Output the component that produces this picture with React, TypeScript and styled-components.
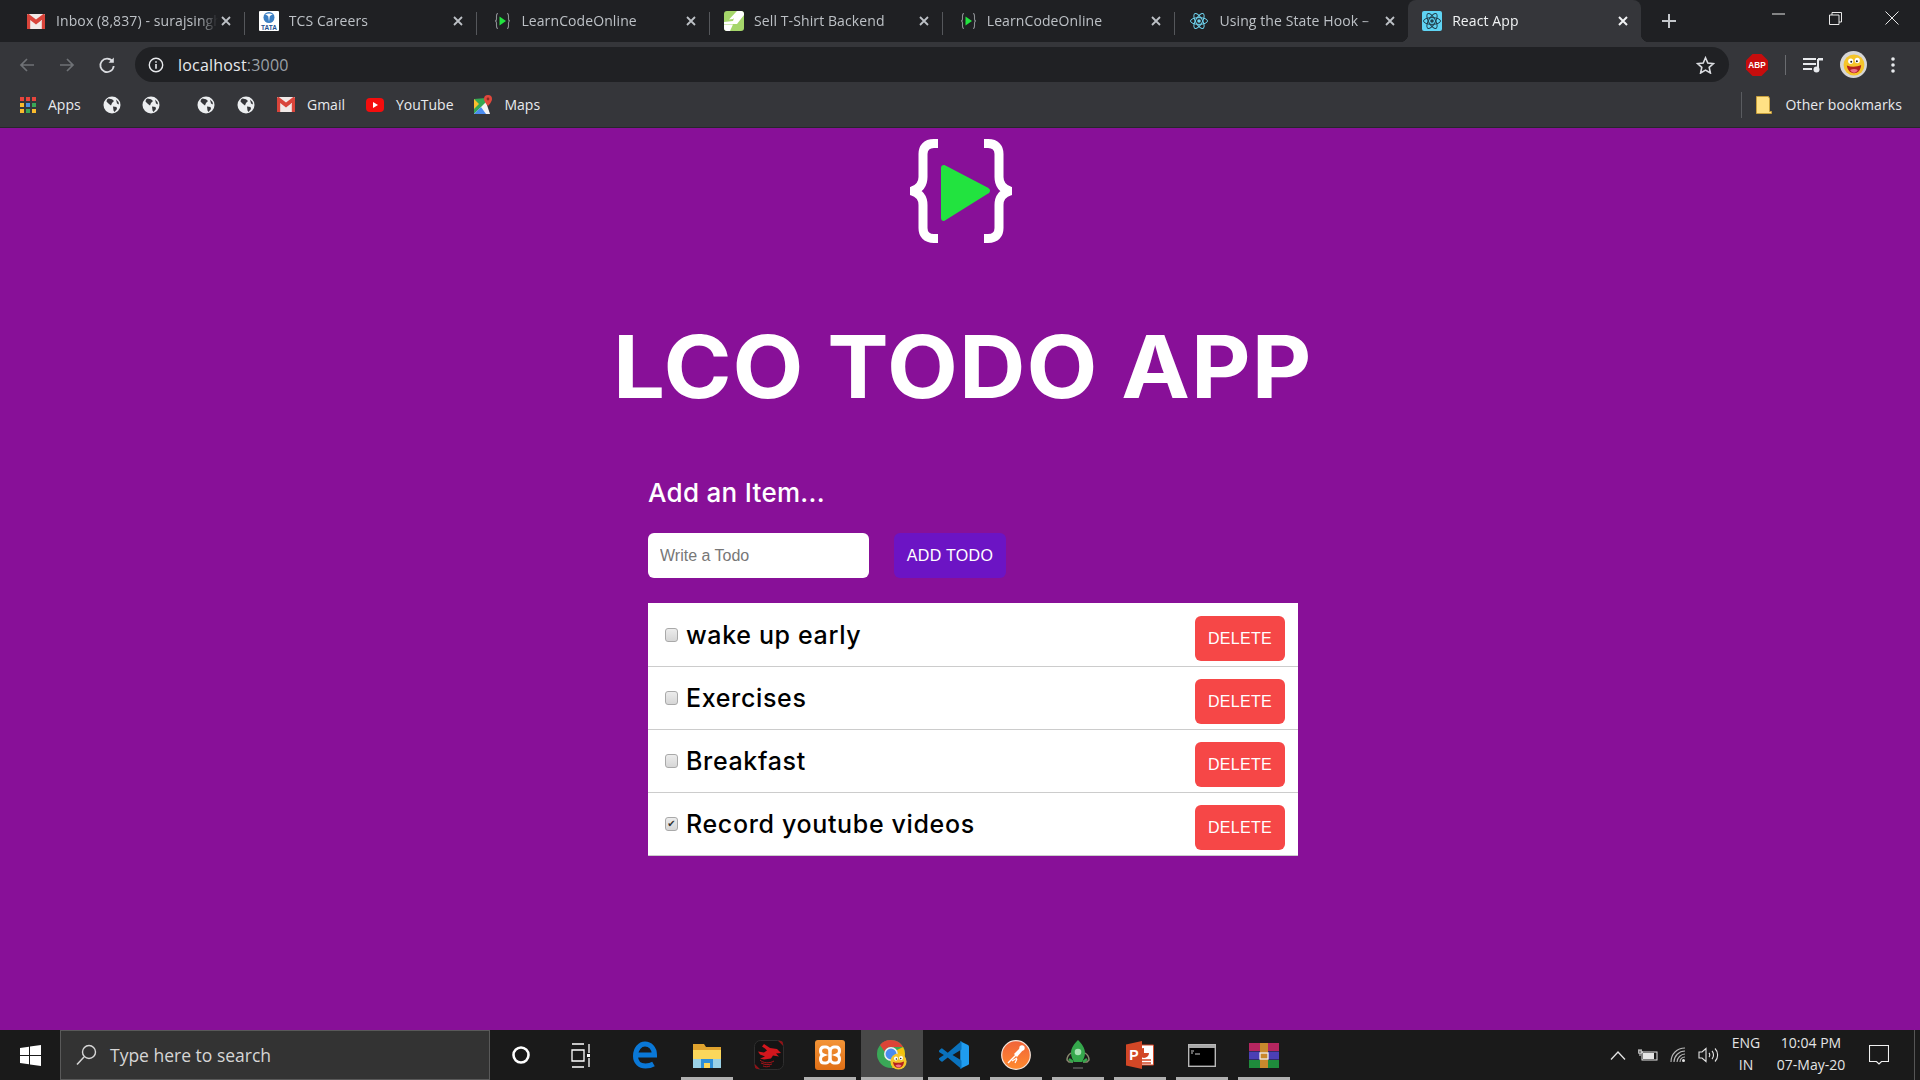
import React from "react";
import styled, { createGlobalStyle } from "styled-components";

const Global = createGlobalStyle`
  html, body { margin: 0; padding: 0; height: 100%; overflow: hidden; }
  body { background: #881098; font-family: "Open Sans", "Liberation Sans", sans-serif; }
  * { box-sizing: border-box; }
`;

const Screen = styled.div`
  width: 1920px;
  height: 1080px;
  display: flex;
  flex-direction: column;
  overflow: hidden;
`;

/* ---------- tab strip ---------- */
const TabStrip = styled.div`
  height: 42px;
  flex: none;
  background: #1f2023;
  display: flex;
  padding-left: 12px;
`;
const Tab = styled.div<{ $active?: boolean; $last?: boolean }>`
  position: relative;
  width: 232.7px;
  height: 42px;
  flex: none;
  display: flex;
  align-items: center;
  padding: 0 8px 0 14px;
  color: ${(p) => (p.$active ? "#f1f3f4" : "#bdc1c6")};
  background: ${(p) => (p.$active ? "#35363a" : "transparent")};
  border-radius: ${(p) => (p.$active ? "8px 8px 0 0" : "0")};
  border-right: ${(p) => (p.$active || p.$last ? "none" : "1px solid #55575b")};
  background-clip: ${(p) => (p.$active ? "border-box" : "padding-box")};
  ${(p) =>
    !p.$active && !p.$last
      ? `&::after { content: ""; position: absolute; right: -1px; top: 0; width: 1px; height: 12px; background: #1f2023; }
         &::before { content: ""; position: absolute; right: -1px; bottom: 0; width: 1px; height: 7px; background: #1f2023; }`
      : ""}
  ${(p) =>
    p.$active
      ? `&::before, &::after { content: ""; position: absolute; bottom: 0; width: 8px; height: 8px; }
         &::before { left: -8px; background: radial-gradient(circle at 0 0, #1f2023 8px, #35363a 8.5px); }
         &::after { right: -8px; background: radial-gradient(circle at 100% 0, #1f2023 8px, #35363a 8.5px); }`
      : ""}
`;
const Favicon = styled.span`
  width: 20px;
  height: 20px;
  flex: none;
  display: flex;
  align-items: center;
  justify-content: center;
`;
const TabTitle = styled.span`
  flex: 1;
  min-width: 0;
  margin: 0 0 2px 10px;
  font-size: 14px;
  letter-spacing: 0.1px;
  white-space: nowrap;
  overflow: hidden;
  -webkit-mask-image: linear-gradient(to right, #000 88%, transparent 100%);
  mask-image: linear-gradient(to right, #000 88%, transparent 100%);
`;
const TabClose = styled.span`
  width: 16px;
  height: 16px;
  flex: none;
  margin-right: 2px;
  display: flex;
  align-items: center;
  justify-content: center;
`;
const NewTab = styled.span`
  margin-left: 17px;
  width: 22px;
  height: 42px;
  flex: none;
  display: flex;
  align-items: center;
  justify-content: center;
`;
const WindowControls = styled.div`
  margin-left: auto;
  display: flex;
`;
const WindowButton = styled.span`
  width: 56.5px;
  height: 36px;
  display: flex;
  align-items: center;
  justify-content: center;
`;

/* ---------- toolbar ---------- */
const Toolbar = styled.div`
  height: 40px;
  flex: none;
  background: #35363a;
  padding: 5px 0 0 7px;
  display: flex;
  align-items: center;
`;
const NavButton = styled.span`
  width: 40px;
  height: 35px;
  flex: none;
  display: flex;
  align-items: center;
  justify-content: center;
`;
const Omnibox = styled.div`
  margin-left: 8px;
  width: 1594px;
  height: 35px;
  flex: none;
  background: #202124;
  border-radius: 18px;
  display: flex;
  align-items: center;
  padding: 0 14px 0 13px;
`;
const Url = styled.span`
  margin-left: 14px;
  flex: 1;
  font-family: "Open Sans", sans-serif;
  font-size: 16px;
  letter-spacing: 0.2px;
  color: #e8eaed;
  em { font-style: normal; color: #9aa0a6; }
`;
const ToolButton = styled.span<{ $w: number }>`
  width: ${(p) => p.$w}px;
  height: 35px;
  flex: none;
  display: flex;
  align-items: center;
  justify-content: center;
`;
const ToolDivider = styled.span`
  width: 1px;
  height: 20px;
  flex: none;
  background: #6a6c70;
`;

/* ---------- bookmarks ---------- */
const BookmarkBar = styled.div`
  height: 46px;
  flex: none;
  background: #35363a;
  border-bottom: 1px solid #26272a;
  padding-left: 20px;
  display: flex;
  align-items: center;
`;
const Bookmark = styled.span<{ $w: number }>`
  width: ${(p) => p.$w}px;
  flex: none;
  display: flex;
  align-items: center;
  gap: 12px;
  color: #e8eaed;
  font-size: 14px;
`;
const OtherBookmarks = styled.span`
  margin-left: auto;
  margin-right: 18px;
  height: 26px;
  display: flex;
  align-items: center;
  gap: 14px;
  padding-left: 14px;
  border-left: 1px solid #5a5c60;
  color: #e8eaed;
  font-size: 14px;
  letter-spacing: 0.1px;
`;

/* ---------- page ---------- */
const Page = styled.main`
  flex: 1;
  min-height: 0;
  background: #881098;
  padding-top: 11px;
  display: flex;
  flex-direction: column;
`;
const LogoRow = styled.div`
  display: flex;
  justify-content: center;
  padding-left: 2px;
`;
const Title = styled.h1`
  margin: 74px 0 0;
  height: 100px;
  line-height: 100px;
  text-align: center;
  color: #fff;
  font-family: Inter, "Liberation Sans", sans-serif;
  font-weight: 650;
  font-size: 86px;
  letter-spacing: 1px;
  padding-left: 5px;
  transform: scaleX(1.07);
`;
const Panel = styled.section`
  margin: 61px 0 0 648px;
  width: 650px;
`;
const AddHeading = styled.h2`
  margin: 0;
  height: 30px;
  line-height: 30px;
  color: #fff;
  font-family: Inter, "Liberation Sans", sans-serif;
  font-weight: 500;
  font-size: 26px;
  letter-spacing: 0.3px;
`;
const AddRow = styled.form`
  margin-top: 25px;
  display: flex;
  gap: 25px;
`;
const TodoInput = styled.input`
  width: 221px;
  height: 45px;
  border: 0;
  border-radius: 6px;
  background: #fff;
  padding: 0 12px;
  font-family: "Liberation Sans", Arial, sans-serif;
  font-size: 16px;
  outline: none;
  &::placeholder { color: #777; opacity: 1; }
`;
const ActionButton = styled.button<{ $tone: string }>`
  height: 45px;
  border: 0;
  border-radius: 6px;
  background: ${(p) => p.$tone};
  color: #fff;
  font-family: "Liberation Sans", Arial, sans-serif;
  font-size: 16px;
  letter-spacing: 0.3px;
  padding: 0;
  flex: none;
`;
const AddButton = styled(ActionButton)`
  width: 112px;
`;
const DeleteButton = styled(ActionButton)`
  width: 90px;
  margin-top: 7px;
`;
const List = styled.ul`
  margin: 25px 0 0;
  padding: 1px 0 0;
  list-style: none;
  background: #fff;
`;
const Row = styled.li`
  height: 63px;
  border-bottom: 1px solid #ccc;
  padding: 0 13px 0 17px;
  display: flex;
  align-items: center;
`;
const RowCheck = styled.input`
  appearance: none;
  position: relative;
  width: 13px;
  height: 14px;
  margin: 0 8px 0 0;
  flex: none;
  border: 1px solid #a9a9a9;
  border-radius: 3px;
  background: linear-gradient(#ececec, #d6d6d6);
  &:checked::after {
    content: "✔";
    position: absolute;
    inset: 0;
    line-height: 12px;
    text-align: center;
    font-size: 10px;
    color: #333;
    font-family: "DejaVu Sans", sans-serif;
  }
`;
const RowText = styled.span`
  flex: 1;
  color: #000;
  font-family: Inter, "Liberation Sans", sans-serif;
  font-weight: 500;
  font-size: 25px;
  letter-spacing: 0.65px;
`;

/* ---------- taskbar ---------- */
const Taskbar = styled.footer`
  height: 50px;
  flex: none;
  background: #1a1a1a;
  display: flex;
  align-items: stretch;
`;
const StartButton = styled.span`
  width: 60px;
  flex: none;
  display: flex;
  align-items: center;
  justify-content: center;
`;
const SearchBox = styled.div`
  width: 430px;
  flex: none;
  background: #333;
  border: 1px solid #595959;
  display: flex;
  align-items: center;
  padding-left: 15px;
  gap: 13px;
  color: #d6d6d6;
  font-size: 17.5px;
`;
const TaskSlot = styled.span<{ $running?: boolean; $active?: boolean }>`
  position: relative;
  width: 61.9px;
  flex: none;
  display: flex;
  align-items: center;
  justify-content: center;
  background: ${(p) => (p.$active ? "#484848" : "transparent")};
  &::after {
    content: "";
    display: ${(p) => (p.$running ? "block" : "none")};
    position: absolute;
    bottom: 0;
    height: 3px;
    left: ${(p) => (p.$active ? 0 : "5px")};
    right: ${(p) => (p.$active ? 0 : "5px")};
    background: #b0b0b0;
  }
`;
const Tray = styled.div`
  margin-left: auto;
  display: flex;
  align-items: center;
  color: #e4e4e4;
  font-size: 14px;
`;
const TrayIcon = styled.span<{ $w: number }>`
  width: ${(p) => p.$w}px;
  display: flex;
  align-items: center;
  justify-content: center;
`;
const TrayText = styled.div<{ $w: number }>`
  width: ${(p) => p.$w}px;
  text-align: center;
  line-height: 22px;
  padding-bottom: 2px;
  white-space: nowrap;
`;
const TrayEdge = styled.span`
  width: 1px;
  height: 100%;
  margin: 0 5px 0 9px;
  background: #555;
`;

/* ---------- drawings ---------- */
const CloseX = ({ c = "#bdc1c6", w = 1.8 }: { c?: string; w?: number }) => (
  <svg width="10" height="10" viewBox="0 0 10 10"><path d="M1 1l8 8M9 1l-8 8" stroke={c} strokeWidth={w} fill="none" /></svg>
);
const GmailIcon = () => (
  <svg width="18" height="15" viewBox="0 0 18 15">
    <rect width="18" height="15" rx="1" fill="#f1e9e7" />
    <path d="M0 1.5V15h3.2V6L9 10.4 14.8 6v9H18V1.5C18 .3 16.6-.4 15.6.4L9 5.4 2.4.4C1.4-.4 0 .3 0 1.5z" fill="#d9443a" />
  </svg>
);
const TataIcon = () => (
  <svg width="20" height="20" viewBox="0 0 20 20">
    <rect width="20" height="20" rx="1" fill="#fff" />
    <circle cx="10" cy="6.5" r="5.5" fill="#3b7fc4" />
    <path d="M6 3.5c3-1.4 5-1.4 8 0-1.5.4-2.5 1-3.3 2L10 11 9.3 5.5C8.5 4.5 7.5 3.9 6 3.5z" fill="#fff" />
    <text x="10" y="18.5" textAnchor="middle" fontSize="6.5" fontWeight="700" fontFamily="Liberation Sans" fill="#1d4f91">TATA</text>
  </svg>
);
const LcoIcon = () => (
  <svg width="20" height="20" viewBox="-3 0 20 20">
    <path d="M4 2.5C2.5 2.5 2.5 3.5 2.5 5v3c0 1-.5 2-1.5 2 1 0 1.5 1 1.5 2v3c0 1.5 0 2.5 1.5 2.5M13 2.5c1.5 0 1.500 1 1.500 2.500v3c0 1 .5 2 1.500 2-1 0-1.500 1-1.500 2v3c0 1.500 0 2.500-1.500 2.500" fill="none" stroke="#8d9094" strokeWidth="1.1" />
    <path d="M5.5 5.5L12 10l-6.500 4.500z" fill="#22e33f" />
  </svg>
);
const ShirtIcon = () => (
  <svg width="20" height="20" viewBox="0 0 20 20">
    <rect width="20" height="20" rx="3" fill="#a5d66a" />
    <path d="M0 11l9-1 1-3-1 1-4 .5L13 0h4c1.7 0 3 1.3 3 3v1l-7 9H0z" fill="#fff" />
    <path d="M0 13.5h9L6 20H3c-1.7 0-3-1.3-3-3z" fill="#fff" />
  </svg>
);
const AtomIcon = ({ c = "#61dafb", bg, s = 20 }: { c?: string; bg?: string; s?: number }) => (
  <svg width={s} height={s} viewBox="0 0 20 20">
    {bg && <rect width="20" height="20" rx="2" fill={bg} />}
    <g fill="none" stroke={c} strokeWidth="1">
      <ellipse cx="10" cy="10" rx="8.5" ry="3.4" />
      <ellipse cx="10" cy="10" rx="8.5" ry="3.4" transform="rotate(60 10 10)" />
      <ellipse cx="10" cy="10" rx="8.5" ry="3.4" transform="rotate(120 10 10)" />
    </g>
    <circle cx="10" cy="10" r="1.8" fill={c} />
  </svg>
);
const Arrow = ({ c, flip }: { c: string; flip?: boolean }) => (
  <svg width="16" height="16" viewBox="0 0 16 16" style={flip ? { transform: "scaleX(-1)" } : undefined}>
    <path d="M15 8H2M8 2L2 8l6 6" fill="none" stroke={c} strokeWidth="1.7" />
  </svg>
);
const Reload = () => (
  <svg width="18" height="18" viewBox="0 0 18 18">
    <path d="M14.5 5.5A6.7 6.7 0 1 0 15.7 10" fill="none" stroke="#dadce0" strokeWidth="1.8" />
    <path d="M15.8 1.5v5.3h-5.3z" fill="#dadce0" />
  </svg>
);
const Info = () => (
  <svg width="16" height="16" viewBox="0 0 16 16">
    <circle cx="8" cy="8" r="6.7" fill="none" stroke="#e8eaed" strokeWidth="1.4" />
    <path d="M7.2 7h1.6v4.7H7.2zM7.2 4.2h1.6v1.6H7.2z" fill="#e8eaed" />
  </svg>
);
const Star = () => (
  <svg width="19" height="18" viewBox="0 0 19 18">
    <path d="M9.5 1.8l2.300 5.200 5.700.6-4.300 3.800 1.200 5.600-4.900-2.900-4.900 2.900 1.200-5.600L1.500 7.600l5.700-.6z" fill="none" stroke="#dadce0" strokeWidth="1.6" />
  </svg>
);
const Abp = () => (
  <svg width="22" height="22" viewBox="0 0 22 22">
    <path d="M6.5 0h9L22 6.5v9L15.5 22h-9L0 15.5v-9z" fill="#c70d0d" />
    <text x="11" y="14.3" textAnchor="middle" fontSize="8.2" fontWeight="700" fontFamily="Liberation Sans" fill="#fff">ABP</text>
  </svg>
);
const MediaIcon = () => (
  <svg width="20" height="16" viewBox="0 0 20 16">
    <path d="M0 1h13v2H0zM0 6h13v2H0zM0 11h9v2H0z" fill="#e8eaed" />
    <path d="M15 2v9.5" stroke="#e8eaed" strokeWidth="2" />
    <circle cx="13.5" cy="12.5" r="3" fill="#e8eaed" />
    <path d="M15 1h5v2.5h-5z" fill="#e8eaed" />
  </svg>
);
const Face = ({ s }: { s: number }) => (
  <svg width={s} height={s} viewBox="0 0 20 20">
    <circle cx="10" cy="10" r="9.5" fill="#f5c52a" />
    <ellipse cx="7" cy="6.5" rx="2.3" ry="2.5" fill="#fff" />
    <ellipse cx="13" cy="6" rx="2.3" ry="2.5" fill="#fff" />
    <circle cx="7.5" cy="7" r=".9" fill="#222" />
    <circle cx="12.6" cy="6.5" r=".9" fill="#222" />
    <path d="M3.5 10.5c4 1.5 9 1.5 13-.5-.4 5-3 7.5-6.5 7.5s-6-3-6.500-7z" fill="#b3211e" />
    <path d="M6.5 14.5c2-1.200 5-1.200 7 0-1 1.800-2 2.500-3.500 2.500s-2.500-.7-3.500-2.500z" fill="#f0708a" />
  </svg>
);
const Avatar = styled.span`
  width: 27px;
  height: 27px;
  border-radius: 50%;
  background: #d6d6d6;
  display: flex;
  flex: none;
  align-items: center;
  justify-content: center;
`;
const Dots = () => (
  <svg width="4" height="16" viewBox="0 0 4 16">
    <circle cx="2" cy="2" r="1.8" fill="#e8eaed" />
    <circle cx="2" cy="8" r="1.8" fill="#e8eaed" />
    <circle cx="2" cy="14" r="1.8" fill="#e8eaed" />
  </svg>
);
const AppsIcon = () => {
  const colors = ["#e8453c", "#e8453c", "#e8453c", "#f9bb2d", "#4a90e2", "#3aa757", "#f9bb2d", "#3aa757", "#f9bb2d"];
  return (
    <svg width="16" height="16" viewBox="0 0 16 16">
      {colors.map((c, i) => (
        <rect key={i} x={(i % 3) * 6} y={Math.floor(i / 3) * 6} width="4" height="4" fill={c} />
      ))}
    </svg>
  );
};
const Globe = () => (
  <svg width="18" height="18" viewBox="0 0 18 18">
    <circle cx="9" cy="9" r="8.5" fill="#eceef0" />
    <path d="M5.5 2.5l3.5.8 2 1.700-2 2-1 2.500-2-1.500-2.500-2.500.5-2zM10 10.500l3.500.5.5 2-2.500 3-1-1.500zM13 3.500l2.500 2.500.5 2.500-2-1z" fill="#35363a" />
  </svg>
);
const YouTubeIcon = () => (
  <svg width="18" height="14" viewBox="0 0 18 14">
    <rect width="18" height="14" rx="4" fill="#f40d0d" />
    <path d="M7 4l5 3-5 3z" fill="#fff" />
  </svg>
);
const MapsIcon = () => (
  <svg width="18" height="20" viewBox="0 0 18 20">
    <path d="M0 4l12-1v16H0z" fill="#35a853" />
    <path d="M0 19L12 7l4 12z" fill="#f4f4f4" />
    <path d="M0 19l7-7 5 7z" fill="#4a8cf0" />
    <path d="M0 4l5 5-5 5z" fill="#fbc02d" />
    <path d="M14 0a4 4 0 0 1 4 4c0 3-4 7-4 7s-4-4-4-7a4 4 0 0 1 4-4z" fill="#e0483c" />
    <circle cx="14" cy="4" r="1.4" fill="#8d2a22" />
  </svg>
);
const FolderIcon = () => (
  <svg width="16" height="18" viewBox="0 0 16 18">
    <path d="M.5.5h12l1 2v13h2v2H.5z" fill="#ffe184" stroke="#c79f3c" />
  </svg>
);
const Logo = () => (
  <svg width="102" height="104" viewBox="0 0 102 104">
    <path d="M28 4.5H24C16 4.5 13 9 13 15V38C13 46 9 50 2 52 9 54 13 58 13 66V89C13 95 16 99.5 24 99.5H28M74 4.5H78C86 4.5 89 9 89 15V38C89 46 93 50 100 52 93 54 89 58 89 66V89C89 95 86 99.5 78 99.5H74" fill="none" stroke="#fff" strokeWidth="9" strokeLinejoin="round" />
    <path d="M34 27l44 23a2 2 0 0 1 0 3.5L34 81a2 2 0 0 1-2-2V29a2 2 0 0 1 2-2z" fill="#22e33f" stroke="#22e33f" strokeWidth="2" strokeLinejoin="round" />
  </svg>
);
const WinLogo = () => (
  <svg width="21" height="21" viewBox="0 0 21 21">
    <path d="M0 3l9-1.300v8.300H0zM10 1.500L21 0v10H10zM0 11h9v8.300L0 18zM10 11h11v10l-11-1.500z" fill="#fff" />
  </svg>
);
const SearchGlass = () => (
  <svg width="21" height="22" viewBox="0 0 21 22">
    <circle cx="13" cy="8" r="6.5" fill="none" stroke="#d8d8d8" strokeWidth="1.4" />
    <path d="M8 13L1 20.5" stroke="#d8d8d8" strokeWidth="1.5" />
  </svg>
);
const Cortana = () => (
  <svg width="20" height="20" viewBox="0 0 20 20"><circle cx="10" cy="10" r="7.5" fill="none" stroke="#fff" strokeWidth="2.6" /></svg>
);
const TaskView = () => (
  <svg width="20" height="25" viewBox="0 0 20 25" style={{ marginRight: 4 }}>
    <path d="M1 1h12M1 24h12M1 7h12v11H1zM18 1v9M18 15v9" fill="none" stroke="#fff" strokeWidth="1.3" />
    <rect x="16" y="11" width="3" height="3" fill="#fff" />
  </svg>
);
const EdgeIcon = () => (
  <svg width="24" height="28" viewBox="0 0 24 28">
    <path d="M4 14h17.5C21.5 7 17 3 12 3 7 3 2.5 8 2.5 15c0 6.5 4.5 10 10 10 3 0 6-.8 8-2" fill="none" stroke="#0a78d7" strokeWidth="5" />
  </svg>
);
const ExplorerIcon = () => (
  <svg width="28" height="26" viewBox="0 0 28 26">
    <path d="M0 2h11l2 3h15v5H0z" fill="#e0a32e" />
    <path d="M0 8h28v18H0z" fill="#fbd75b" />
    <path d="M8 17h12v9h-3v-5h-6v5H8z" fill="#2f8fd8" />
    <path d="M0 17h8v9H0zM20 17h8v9h-8z" fill="#8fd0f5" opacity=".9" />
  </svg>
);
const MsiIcon = () => (
  <svg width="30" height="30" viewBox="0 0 30 30">
    <rect x=".5" y=".5" width="29" height="29" rx="6" fill="#141414" stroke="#2e2e2e" />
    <path d="M24 .8l5 5v-2a3 3 0 0 0-3-3zM.8 24l5 5h-2a3 3 0 0 1-3-3z" fill="#8e1418" />
    <path d="M10 4l6 4 7 1 4 4-5 .5 3 3-6-1-2 3-7 1-4-1 5-2-5-2-2-3 6 1 3-2-2-2-3-2z" fill="#d3161d" />
    <path d="M6 20c3 3 9 4 14 1M7 23c4 2 8 2 11 1M9 26c2 1 5 1 7 0" fill="none" stroke="#a81319" strokeWidth="1" />
  </svg>
);
const XamppIcon = () => (
  <svg width="30" height="30" viewBox="0 0 30 30">
    <defs>
      <linearGradient id="xamppFill" x1="0" y1="0" x2="0" y2="1">
        <stop offset="0" stopColor="#f39437" />
        <stop offset="1" stopColor="#e06f16" />
      </linearGradient>
    </defs>
    <rect width="30" height="30" rx="3" fill="url(#xamppFill)" />
    <path d="M9 7h2c2 0 3 1.5 4 3 1-1.5 2-3 4-3h2c2.5 0 3.5 2 3.5 4 0 2-1.5 3.5-3 4 1.5.5 3 2 3 4s-1 4-3.5 4h-2c-2 0-3-1.500-4-3-1 1.500-2 3-4 3H9c-2.500 0-3.500-2-3.500-4s1.500-3.500 3-4c-1.500-.5-3-2-3-4s1-4 3.500-4z" fill="none" stroke="#fff" strokeWidth="3" />
    <path d="M15 9v12" stroke="#fff" strokeWidth="3.5" />
  </svg>
);
const ChromeIcon = () => (
  <svg width="30" height="30" viewBox="0 0 30 30">
    <circle cx="14" cy="14" r="14" fill="#3aa757" />
    <path d="M14 0a14 14 0 0 1 12.1 7H14a7 7 0 0 0-6.5 4.5L3 5A14 14 0 0 1 14 0z" fill="#dc4437" />
    <path d="M26.1 7A14 14 0 0 1 15 28l6-11-1-7z" fill="#f4c20d" />
    <circle cx="14" cy="14" r="6.2" fill="#4a8cf0" stroke="#eee" strokeWidth="1.5" />
    <g transform="translate(13 13)"><Face s={17} /></g>
  </svg>
);
const VsCodeIcon = () => (
  <svg width="30" height="30" viewBox="0 0 24 24">
    <path d="M17 1l6.2 3A1.5 1.5 0 0 1 24 5.3v13.4a1.5 1.5 0 0 1-.8 1.3L17 23z" fill="#1f9cf0" />
    <path d="M18 .8L7 10.1 2.900 6.900a1 1 0 0 0-1.300.1L.3 8.200a1 1 0 0 0 0 1.500L3.900 12 .3 14.300a1 1 0 0 0 0 1.500l1.300 1.200a1 1 0 0 0 1.300.1L7 13.900 18 23.200v-6.800L10.800 12 18 7.600z" fill="#0a72bd" />
  </svg>
);
const PostmanIcon = () => (
  <svg width="30" height="30" viewBox="0 0 30 30">
    <defs>
      <linearGradient id="postmanFill" x1="0" y1="0" x2="0" y2="1">
        <stop offset="0" stopColor="#f0643a" />
        <stop offset="1" stopColor="#ff8a2e" />
      </linearGradient>
    </defs>
    <circle cx="15" cy="15" r="14.3" fill="url(#postmanFill)" stroke="#f7e6dc" strokeWidth="1.2" />
    <path d="M7 23l8-8" stroke="#fff" strokeWidth="1.4" />
    <path d="M13 14l6-6 3 2-6 7z" fill="#fff" />
    <circle cx="21" cy="8" r="2.7" fill="#fff" />
    <path d="M11 21l5-3M14 23l2-4" stroke="#fff" strokeWidth="1.2" />
  </svg>
);
const RocketIcon = () => (
  <svg width="24" height="30" viewBox="0 0 24 30">
    <path d="M12 0c4 4 7 8 7 13 0 4-2 7-3 9H8c-1-2-3-5-3-9C5 8 8 4 12 0z" fill="#35a84c" />
    <circle cx="12" cy="12" r="3.3" fill="#a6e2b2" />
    <path d="M5 13c-3 2-4 5-4 7l2 2h4M19 13c3 2 4 5 4 7l-2 2h-4" fill="none" stroke="#8a8a70" strokeWidth="1.5" />
    <path d="M3 19l4 3M21 19l-4 3" stroke="#35a84c" strokeWidth="2.5" />
    <path d="M7 28h10" stroke="#4a4a4a" strokeWidth="2" />
  </svg>
);
const PowerPointIcon = () => (
  <svg width="28" height="28" viewBox="0 0 28 28">
    <path d="M11 4h16.5v20H11z" fill="#fff" stroke="#d24726" />
    <path d="M18 7a5 5 0 1 0 5 5h-5z" fill="#d24726" />
    <path d="M16 19h9M16 22h9" stroke="#d24726" strokeWidth="1.5" />
    <path d="M0 3.5L16 0v28L0 24.5z" fill="#d24726" />
    <text x="8" y="19" textAnchor="middle" fontSize="14" fontWeight="700" fontFamily="Liberation Sans" fill="#fff">P</text>
  </svg>
);
const CmdIcon = () => (
  <svg width="28" height="23" viewBox="0 0 28 23">
    <rect x=".7" y=".7" width="26.6" height="21.6" fill="#000" stroke="#b8b8b8" strokeWidth="1.4" />
    <rect x="1" y="1" width="26" height="3" fill="#a8a8a8" />
    <path d="M3 7h3M3 9h2M7 10h5" stroke="#ccc" strokeWidth="1" />
  </svg>
);
const RarIcon = () => (
  <svg width="30" height="25" viewBox="0 0 30 25">
    <rect width="30" height="8" fill="#b5265f" />
    <rect y="8.5" width="30" height="8" fill="#4b3fb5" />
    <rect y="17" width="30" height="8" fill="#1f8c3c" />
    <rect x="11" width="8" height="25" fill="#c9892d" />
    <rect x="11" y="10" width="8" height="6" fill="none" stroke="#eee" strokeWidth="1.3" />
  </svg>
);
const Chevron = () => (
  <svg width="16" height="9" viewBox="0 0 16 9"><path d="M1 8.5L8 1l7 7.5" fill="none" stroke="#e4e4e4" strokeWidth="1.3" /></svg>
);
const Battery = () => (
  <svg width="20" height="12" viewBox="0 0 20 12">
    <path d="M1 0v2M3 0v2M0 2h4v2H0zM2 4v3" stroke="#e4e4e4" strokeWidth="1" fill="none" />
    <rect x="4" y="3" width="15" height="8" fill="none" stroke="#e4e4e4" />
    <rect x="5" y="4" width="11" height="6" fill="#e4e4e4" />
  </svg>
);
const Wifi = () => (
  <svg width="16" height="16" viewBox="0 0 16 16" fill="none" stroke="#b8b8b8" strokeWidth="1.1">
    <path d="M1 15C1 7 7 1 15 1M4 15c0-6 5-11 11-11M7 15c0-4 4-8 8-8M10 15c0-3 2-5 5-5" />
    <circle cx="13.5" cy="13.5" r="1.5" fill="#e4e4e4" stroke="none" />
  </svg>
);
const Speaker = () => (
  <svg width="21" height="16" viewBox="0 0 21 16" fill="none" stroke="#e4e4e4" strokeWidth="1.1">
    <path d="M1 5h3l4-3.5v13L4 11H1zM11 6c1 1 1 3 0 4M14 4c2 2 2 6 0 8M17 1.5c3.5 3.5 3.5 9.5 0 13" />
  </svg>
);
const Notify = () => (
  <svg width="20" height="20" viewBox="0 0 20 20">
    <path d="M.5.5h19v16H12.5L10 19l-2.5-2.5H.5z" fill="none" stroke="#f0f0f0" strokeWidth="1.1" />
  </svg>
);

const tabs = [
  { title: "Inbox (8,837) - surajsingh", icon: <GmailIcon /> },
  { title: "TCS Careers", icon: <TataIcon /> },
  { title: "LearnCodeOnline", icon: <LcoIcon /> },
  { title: "Sell T-Shirt Backend", icon: <ShirtIcon /> },
  { title: "LearnCodeOnline", icon: <LcoIcon /> },
  { title: "Using the State Hook –", icon: <AtomIcon c="#6fd3ee" /> },
];

const todos = [
  { text: "wake up early", done: false },
  { text: "Exercises", done: false },
  { text: "Breakfast", done: false },
  { text: "Record youtube videos", done: true },
];

const apps: { icon: React.ReactNode; running?: boolean; active?: boolean }[] = [
  { icon: <Cortana /> },
  { icon: <TaskView /> },
  { icon: <EdgeIcon /> },
  { icon: <ExplorerIcon />, running: true },
  { icon: <MsiIcon /> },
  { icon: <XamppIcon />, running: true },
  { icon: <ChromeIcon />, running: true, active: true },
  { icon: <VsCodeIcon />, running: true },
  { icon: <PostmanIcon />, running: true },
  { icon: <RocketIcon />, running: true },
  { icon: <PowerPointIcon />, running: true },
  { icon: <CmdIcon />, running: true },
  { icon: <RarIcon />, running: true },
];

export default function App() {
  return (
    <Screen>
      <Global />
      <TabStrip>
        {tabs.map((t, i) => (
          <Tab key={i} $last={i === 5}>
            <Favicon>{t.icon}</Favicon>
            <TabTitle>{t.title}</TabTitle>
            <TabClose><CloseX /></TabClose>
          </Tab>
        ))}
        <Tab $active>
          <Favicon><AtomIcon c="#20404e" bg="#5fd4f4" /></Favicon>
          <TabTitle>React App</TabTitle>
          <TabClose><CloseX c="#f1f3f4" w={2} /></TabClose>
        </Tab>
        <NewTab>
          <svg width="16" height="16" viewBox="0 0 16 16"><path d="M8 1v14M1 8h14" stroke="#c4c7cb" strokeWidth="2" /></svg>
        </NewTab>
        <WindowControls>
          <WindowButton><svg width="13" height="12" viewBox="0 0 13 12" style={{ marginBottom: 8 }}><path d="M0 6h13" stroke="#e8e8e8" /></svg></WindowButton>
          <WindowButton><svg width="13" height="13" viewBox="0 0 13 13"><path d="M.5 3h9.5v9.5H.5zM3 3V.5h9.5V10H10" fill="none" stroke="#e8e8e8" /></svg></WindowButton>
          <WindowButton><svg width="14" height="14" viewBox="0 0 14 14"><path d="M.5.5l13 13M13.5.5l-13 13" stroke="#e8e8e8" /></svg></WindowButton>
        </WindowControls>
      </TabStrip>

      <Toolbar>
        <NavButton><Arrow c="#6f7276" /></NavButton>
        <NavButton><Arrow c="#6f7276" flip /></NavButton>
        <NavButton><Reload /></NavButton>
        <Omnibox>
          <Info />
          <Url>localhost<em>:3000</em></Url>
          <Star />
        </Omnibox>
        <ToolButton $w={56}><Abp /></ToolButton>
        <ToolDivider />
        <ToolButton $w={53}><MediaIcon /></ToolButton>
        <ToolButton $w={29}><Avatar><Face s={22} /></Avatar></ToolButton>
        <ToolButton $w={49}><Dots /></ToolButton>
      </Toolbar>

      <BookmarkBar>
        <Bookmark $w={82.6}><AppsIcon />Apps</Bookmark>
        <Bookmark $w={39.4}><Globe /></Bookmark>
        <Bookmark $w={55}><Globe /></Bookmark>
        <Bookmark $w={40}><Globe /></Bookmark>
        <Bookmark $w={40}><Globe /></Bookmark>
        <Bookmark $w={89}><GmailIcon />Gmail</Bookmark>
        <Bookmark $w={108.5}><YouTubeIcon />YouTube</Bookmark>
        <Bookmark $w={70}><MapsIcon />Maps</Bookmark>
        <OtherBookmarks><FolderIcon />Other bookmarks</OtherBookmarks>
      </BookmarkBar>

      <Page>
        <LogoRow><Logo /></LogoRow>
        <Title>LCO TODO APP</Title>
        <Panel>
          <AddHeading>Add an Item...</AddHeading>
          <AddRow>
            <TodoInput placeholder="Write a Todo" />
            <AddButton $tone="#6c14c4" type="button">ADD TODO</AddButton>
          </AddRow>
          <List>
            {todos.map((t) => (
              <Row key={t.text}>
                <RowCheck type="checkbox" defaultChecked={t.done} />
                <RowText>{t.text}</RowText>
                <DeleteButton $tone="#f64747" type="button">DELETE</DeleteButton>
              </Row>
            ))}
          </List>
        </Panel>
      </Page>

      <Taskbar>
        <StartButton><WinLogo /></StartButton>
        <SearchBox><SearchGlass />Type here to search</SearchBox>
        {apps.map((a, i) => (
          <TaskSlot key={i} $running={a.running} $active={a.active}>{a.icon}</TaskSlot>
        ))}
        <Tray>
          <TrayIcon $w={30}><Chevron /></TrayIcon>
          <TrayIcon $w={30}><Battery /></TrayIcon>
          <TrayIcon $w={30}><Wifi /></TrayIcon>
          <TrayIcon $w={30}><Speaker /></TrayIcon>
          <TrayText $w={46}>ENG<br />IN</TrayText>
          <TrayText $w={84}>10:04 PM<br />07-May-20</TrayText>
          <TrayIcon $w={52}><Notify /></TrayIcon>
          <TrayEdge />
        </Tray>
      </Taskbar>
    </Screen>
  );
}
